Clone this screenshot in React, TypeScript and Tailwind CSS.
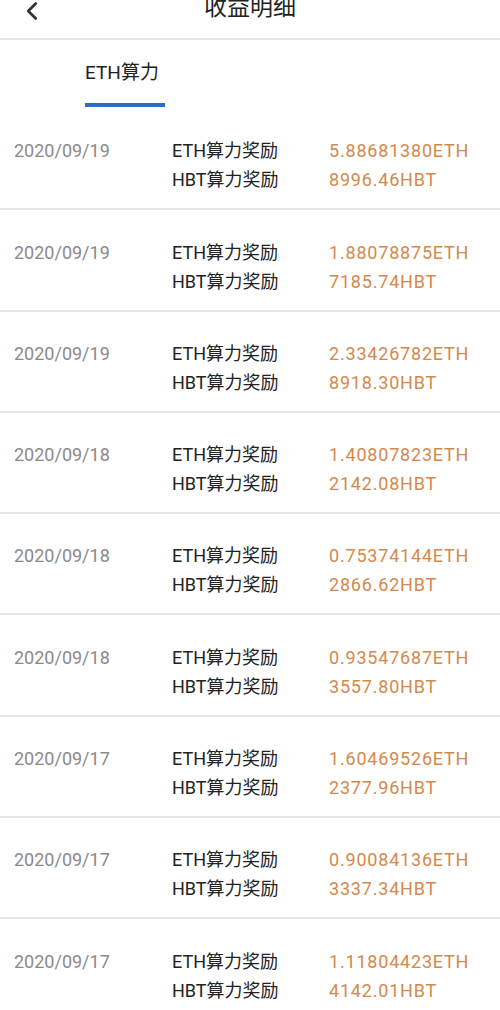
import { ChevronLeft } from "lucide-react"

const rows = [
    { date: "2020/09/19", eth: "5.88681380ETH", hbt: "8996.46HBT" },
    { date: "2020/09/19", eth: "1.88078875ETH", hbt: "7185.74HBT" },
    { date: "2020/09/19", eth: "2.33426782ETH", hbt: "8918.30HBT" },
    { date: "2020/09/18", eth: "1.40807823ETH", hbt: "2142.08HBT" },
    { date: "2020/09/18", eth: "0.75374144ETH", hbt: "2866.62HBT" },
    { date: "2020/09/18", eth: "0.93547687ETH", hbt: "3557.80HBT" },
    { date: "2020/09/17", eth: "1.60469526ETH", hbt: "2377.96HBT" },
    { date: "2020/09/17", eth: "0.90084136ETH", hbt: "3337.34HBT" },
    { date: "2020/09/17", eth: "1.11804423ETH", hbt: "4142.01HBT" },
];

export default function App() {
    return (
        <div className="w-[500px] h-[1010px] overflow-hidden bg-white text-[#222]" style={{ fontFamily: 'Roboto, "Noto Sans CJK SC", sans-serif' }}>
            {/* header (top is cut off in the shot) */}
            <header className="relative h-[40px] border-b-2 border-[#e6e6e6] flex justify-center items-start">
                <ChevronLeft className="absolute left-[17px] -top-[4px] text-[#333]" size={30} strokeWidth={2.2} />
                <div className="text-[23px] leading-none -mt-[4px]">收益明细</div>
            </header>

            {/* tab */}
            <div className="h-[69px] pl-[85px] flex flex-col">
                <div className="mt-[21px] text-[19px] leading-[24px] w-fit">ETH算力</div>
                <div className="mt-[18px] w-[80px] h-[4px] bg-[#2b6cc4]"></div>
            </div>

            <div>
                {rows.map((r, i) => (
                    <div key={i} className="flex pt-[27.3px] pb-[14px] border-b-2 border-[#e6e6e6] text-[18px] leading-[29px]">
                        <div className="w-[172px] pl-[14px] text-[#8a8a8a]">{r.date}</div>
                        <div className="w-[157px]">
                            <div>ETH算力奖励</div>
                            <div>HBT算力奖励</div>
                        </div>
                        <div className="text-[#d4894c] tracking-[0.8px]">
                            <div>{r.eth}</div>
                            <div>{r.hbt}</div>
                        </div>
                    </div>
                ))}
            </div>
        </div>
    )
}
